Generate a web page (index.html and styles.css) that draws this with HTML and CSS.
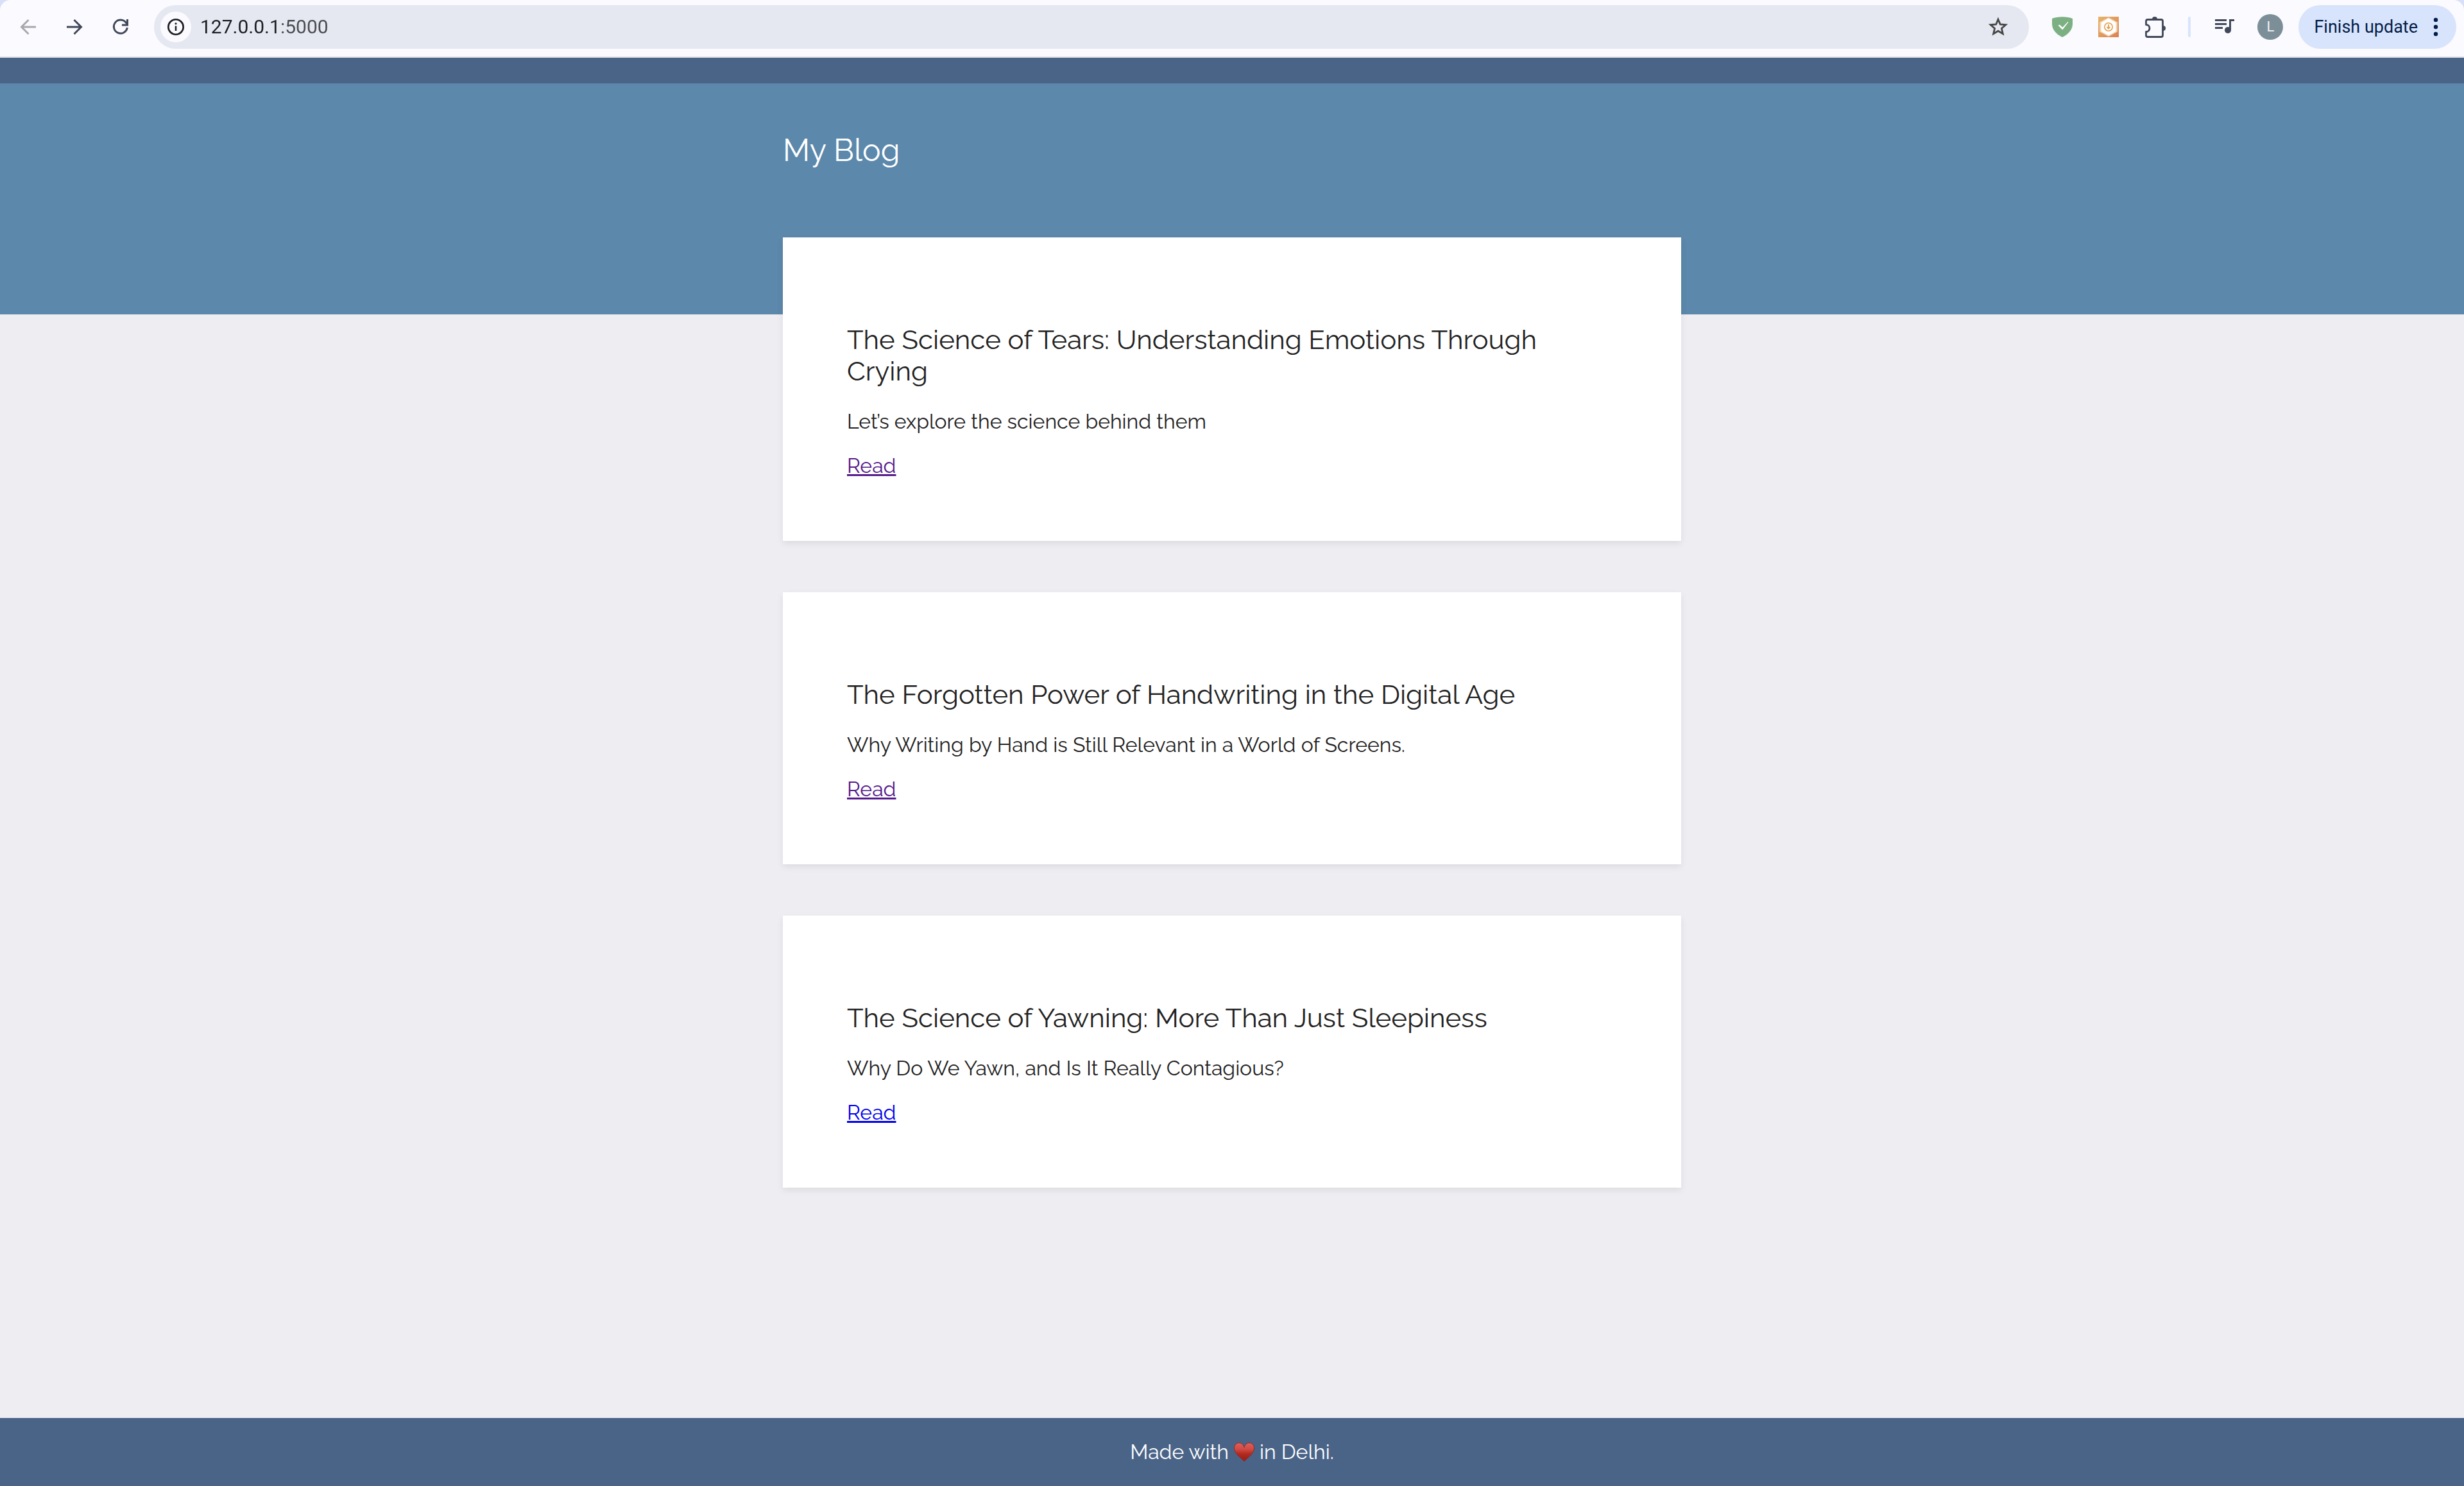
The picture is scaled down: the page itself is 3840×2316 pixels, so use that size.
FILE: index.html
```html
<!DOCTYPE html>
<html lang="en">
<head>
<meta charset="utf-8">
<meta name="viewport" content="width=device-width, initial-scale=1">
<title>My Blog</title>
<link rel="stylesheet" href="styles.css">
</head>
<body>
<div class="toolbar-frame">
<nav class="toolbar" aria-label="Browser toolbar">
  <div class="nav-buttons">
    <button class="icon-button is-disabled" aria-label="Back" disabled>
      <svg width="32" height="32" viewBox="0 0 32 32" fill="none" stroke="currentColor" stroke-width="3"><path d="M28 16H6M16.500 5 5.500 16l11 11"/></svg>
    </button>
    <button class="icon-button" aria-label="Forward">
      <svg width="32" height="32" viewBox="0 0 32 32" fill="none" stroke="currentColor" stroke-width="3"><path d="M4 16h22M15.500 5l11 11-11 11"/></svg>
    </button>
    <button class="icon-button" aria-label="Reload">
      <svg width="32" height="32" viewBox="0 0 32 32" fill="none" stroke="currentColor" stroke-width="3"><path d="M26.300 17A10.500 10.500 0 1 1 24.500 9.500l2 3"/><path d="M26.500 4v9H18"/></svg>
    </button>
  </div>
  <div class="address">
    <button class="site-info" aria-label="View site information">
      <svg width="28" height="28" viewBox="0 0 28 28" fill="none" stroke="currentColor"><circle cx="14" cy="14" r="11.700" stroke-width="2.600"/><path d="M14 12.500V20" stroke-width="2.600"/><circle cx="14" cy="8.800" r="1.600" fill="currentColor" stroke="none"/></svg>
    </button>
    <input class="url" type="text" value="127.0.0.1:5000" aria-label="Address" spellcheck="false">
    <button class="icon-button star" aria-label="Bookmark this tab">
      <svg width="32" height="32" viewBox="0 0 32 32" fill="none" stroke="currentColor" stroke-width="2.800"><path d="M16 4.200l3.300 7.800 8.500.7-6.400 5.600 1.900 8.300L16 22.200l-7.300 4.400 1.900-8.300-6.400-5.600 8.500-.7z"/></svg>
    </button>
  </div>
  <div class="extensions">
    <button class="icon-button" aria-label="Ad blocker">
      <svg width="32" height="32" viewBox="0 0 32 32"><path d="M0 3C8-.8 24-.8 32 3v8c0 9-6 16-16 21C6 27 0 20 0 11z" fill="#7cb082"/><path d="M9.500 13.500l2.500-1 4.300 4.200L24.500 8l1 .4L16.300 20.500z" fill="#fff"/></svg>
    </button>
    <button class="icon-button" aria-label="Downloader">
      <svg width="32" height="32" viewBox="0 0 32 32"><defs><linearGradient id="amber" x1="0" y1="0" x2="1" y2="1"><stop offset="0" stop-color="#e6b46c"/><stop offset="1" stop-color="#da8150"/></linearGradient></defs><path fill="url(#amber)" d="M0 0h32v32H0z"/><path d="M16 1l14 7.500v15L16 31 2 23.500v-15z" fill="#f3d3b1"/><path d="M16 2.500l11.500 6.700v13.600L16 29.500 4.500 22.800V9.200z" fill="#fff"/><g fill="none" stroke="#e2a04c" stroke-width="1.600"><circle cx="16" cy="16" r="6.200"/><path d="M16 12v6.500M13.500 16l2.500 2.600 2.500-2.600" stroke-width="1.800"/></g></svg>
    </button>
    <button class="icon-button" aria-label="Extensions">
      <svg width="36" height="36" viewBox="0 0 36 36"><path d="M4.500 9q0-2.500 2.500-2.500h21q2.500 0 2.500 2.500v22q0 2.500-2.500 2.500H7q-2.500 0-2.500-2.500v-5.500a5.500 5.500 0 0 0 0-11z" fill="none" stroke="currentColor" stroke-width="2.800" stroke-linejoin="round"/><path d="M14 6a4 4 0 0 1 8 0zM31 16a4 4 0 0 1 0 8z" fill="currentColor"/></svg>
    </button>
  </div>
  <span class="divider"></span>
  <button class="icon-button" aria-label="Media controls">
    <svg width="32" height="32" viewBox="0 0 32 32" fill="currentColor"><path d="M2 4h18v3H2zM2 10h18v3H2zM2 16h12v3H2zM24 4h8v3h-5v14h-3z"/><circle cx="22" cy="21" r="5"/></svg>
  </button>
  <button class="avatar" aria-label="Profile">L</button>
  <button class="update">Finish update
    <svg width="8" height="32" viewBox="0 0 8 32" fill="currentColor" aria-hidden="true"><circle cx="4" cy="5" r="3.200"/><circle cx="4" cy="16" r="3.200"/><circle cx="4" cy="27" r="3.200"/></svg>
  </button>
</nav>
</div>
<header class="hero">
  <h1 class="hero-title">My Blog</h1>
</header>
<main class="posts">
  <article class="card">
    <h2 class="card-title">The Science of Tears: Understanding Emotions Through Crying</h2>
    <p class="card-text">Let’s explore the science behind them</p>
    <a class="card-link is-read" href="#tears">Read</a>
  </article>
  <article class="card">
    <h2 class="card-title">The Forgotten Power of Handwriting in the Digital Age</h2>
    <p class="card-text">Why Writing by Hand is Still Relevant in a World of Screens.</p>
    <a class="card-link is-read" href="#handwriting">Read</a>
  </article>
  <article class="card">
    <h2 class="card-title">The Science of Yawning: More Than Just Sleepiness</h2>
    <p class="card-text">Why Do We Yawn, and Is It Really Contagious?</p>
    <a class="card-link" href="#yawning">Read</a>
  </article>
</main>
<footer class="footer">
  <span>Made with</span>
  <svg class="heart" width="32" height="30" viewBox="0 0 32 30" role="img" aria-label="love"><defs><linearGradient id="red" x1="0" y1="0" x2="0" y2="1"><stop offset="0" stop-color="#e0605c"/><stop offset=".35" stop-color="#cf4a42"/><stop offset=".6" stop-color="#b02a20"/><stop offset="1" stop-color="#981c12"/></linearGradient></defs><path d="M16 29.500C12 25 .5 18 .5 9 .5 4 4 .8 8 .8c4 0 7 3 8 7.200 1-4.200 4-7.200 8-7.200s7.500 3.200 7.500 8.200c0 9-11.500 16-15.500 20.500z" fill="url(#red)" stroke="#8e2a2c" stroke-width="1"/></svg>
  <span>in Delhi.</span>
</footer>
</body>
</html>
```
FILE: styles.css
```css
* {
  box-sizing: border-box;
}

body {
  margin: 0;
  min-height: 100vh;
  display: flex;
  flex-direction: column;
  background: #eeedf2;
  color: #222;
  font: 400 32px/37px Raleway, Lato, "Open Sans", sans-serif;
}

button,
input {
  margin: 0;
  padding: 0;
  border: 0;
  background: none;
  color: inherit;
  font: inherit;
}

/* Browser toolbar */
.toolbar-frame {
  background: #d8e0f8;
}

.toolbar {
  display: flex;
  align-items: center;
  gap: 24px;
  padding: 8px 12px 12px 16px;
  border-bottom: 2px solid #e1e2ea;
  border-radius: 16px 16px 0 0;
  background: #fafaff;
  color: #414859;
  font: 400 30px/36px Roboto, sans-serif;
}

.nav-buttons,
.extensions {
  display: flex;
  gap: 16px;
}

.icon-button {
  display: flex;
  align-items: center;
  justify-content: center;
  width: 56px;
  height: 56px;
}

.is-disabled {
  color: #a9a9ad;
}

.address {
  flex: 1;
  display: flex;
  align-items: center;
  height: 68px;
  padding: 0 20px 0 10px;
  border-radius: 34px;
  background: #e5e8f1;
}

.site-info {
  display: flex;
  align-items: center;
  justify-content: center;
  width: 48px;
  height: 48px;
  border-radius: 50%;
  background: #fafaff;
  color: #1d1e22;
}

/* The host is darker than the port */
.url {
  flex: 1;
  margin-left: 14px;
  color: transparent;
  background: linear-gradient(90deg, #1d1e22 125px, #4a4b4f 125px);
  -webkit-background-clip: text;
  background-clip: text;
}

.star {
  color: #474747;
}

.divider {
  width: 4px;
  height: 32px;
  border-radius: 2px;
  background: #d8e4fc;
}

.avatar {
  width: 40px;
  height: 40px;
  border-radius: 50%;
  background: #7c8f99;
  color: #f2f4f5;
  font-size: 22px;
  line-height: 40px;
}

.update {
  display: flex;
  align-items: center;
  gap: 24px;
  height: 68px;
  padding: 0 28px 0 24px;
  border-radius: 34px;
  background: #d8e4fc;
  color: #041e49;
  font: 400 27px/36px Roboto, sans-serif;
}

/* Page */
.hero {
  height: 400px;
  padding: 76px 24px 0;
  border-top: 40px solid #4a6488;
  background: #5c88ab;
}

.hero-title {
  width: 100%;
  max-width: 1400px;
  margin: 0 auto;
  color: #fff;
  font-size: 48px;
  font-weight: 400;
  line-height: 56px;
}

.posts {
  display: grid;
  gap: 80px;
  width: 100%;
  max-width: 1400px;
  margin: -120px auto 80px;
}

.card {
  padding: 100px 100px 99px;
  background: #fff;
  box-shadow: 0 4px 10px rgba(0, 0, 0, 0.08);
}

.card-title {
  margin: 35px 0;
  font-size: 42px;
  font-weight: 400;
  line-height: 49px;
}

.card-text {
  margin: 0 0 32px;
}

.card-link {
  display: block;
  width: fit-content;
  color: #0000ee;
  text-decoration-thickness: 3px;
  text-underline-offset: 2px;
}

.card-link.is-read {
  color: #551a8b;
}

.footer {
  display: flex;
  align-items: center;
  justify-content: center;
  gap: 8px;
  margin-top: auto;
  padding: 34px 24px 35px;
  background: #4a6488;
  color: #fff;
}
```
